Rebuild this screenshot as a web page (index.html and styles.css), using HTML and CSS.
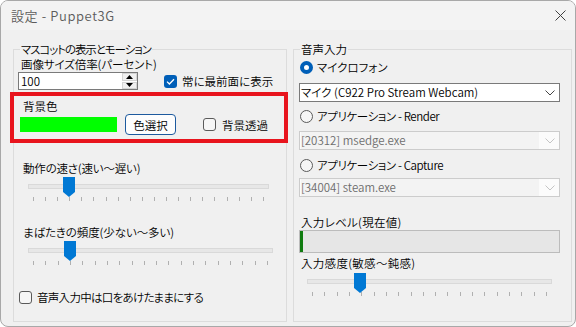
FILE: index.html
```html
<!DOCTYPE html>
<html lang="ja">
<head>
<meta charset="utf-8">
<title>設定 - Puppet3G</title>
<link rel="stylesheet" href="styles.css">
</head>
<body>
<div class="window">
  <div class="titlebar">
    <span class="title">設定 - Puppet3G</span>
    <svg class="close" width="11" height="11" viewBox="0 0 11 11"><path d="M0.5 0.5 L10.5 10.5 M10.5 0.5 L0.5 10.5" stroke="#404040" stroke-width="1" fill="none"/></svg>
  </div>
  <div class="client">
    <fieldset class="group group-left">
      <legend>マスコットの表示とモーション</legend>
      <div class="lbl lbl-size">画像サイズ倍率(パーセント)</div>
      <div class="size-row">
        <div class="numeric">
          <span class="num-val">100</span>
          <span class="spin">
            <span class="spin-btn"><svg width="7" height="4" viewBox="0 0 7 4"><path d="M3.5 0 L7 4 L0 4 Z" fill="#000"/></svg></span>
            <span class="spin-btn"><svg width="7" height="4" viewBox="0 0 7 4"><path d="M0 0 L7 0 L3.5 4 Z" fill="#000"/></svg></span>
          </span>
        </div>
        <span class="chk chk-on"><svg width="9" height="7" viewBox="0 0 9 7"><path d="M1 3.6 L3.4 6 L8 1.2" stroke="#fff" stroke-width="1.3" fill="none"/></svg></span>
        <span class="chk-label">常に最前面に表示</span>
      </div>
      <div class="highlight">
        <div class="lbl lbl-bg">背景色</div>
        <div class="bg-row">
          <span class="swatch"></span>
          <span class="btn">色選択</span>
          <span class="chk chk-off chk-bgt"></span>
          <span class="chk-label chk-label-bgt">背景透過</span>
        </div>
      </div>
      <div class="lbl lbl-speed">動作の速さ(速い～遅い)</div>
      <div class="slider slider-speed">
        <div class="track"></div>
        <div class="ticks"><i></i><i></i><i></i><i></i><i></i><i></i><i></i><i></i><i></i><i></i><i></i><i></i><i></i><i></i><i></i><i></i><i></i><i></i><i></i><i></i></div>
        <svg class="thumb" width="12" height="20" viewBox="0 0 12 20"><path d="M0 0 H12 V15 L6 20 L0 15 Z" fill="#0078d4"/></svg>
      </div>
      <div class="lbl lbl-blink">まばたきの頻度(少ない～多い)</div>
      <div class="slider slider-blink">
        <div class="track"></div>
        <div class="ticks"><i></i><i></i><i></i><i></i><i></i><i></i><i></i><i></i><i></i><i></i><i></i><i></i><i></i><i></i><i></i><i></i><i></i><i></i><i></i><i></i></div>
        <svg class="thumb" width="12" height="20" viewBox="0 0 12 20"><path d="M0 0 H12 V15 L6 20 L0 15 Z" fill="#0078d4"/></svg>
      </div>
      <div class="mouth-row">
        <span class="chk chk-off"></span>
        <span class="chk-label chk-label-mouth">音声入力中は口をあけたままにする</span>
      </div>
    </fieldset>

    <fieldset class="group group-right">
      <legend>音声入力</legend>
      <div class="radio-row rr-mic">
        <span class="radio radio-on"></span>
        <span class="radio-label">マイクロフォン</span>
      </div>
      <div class="combo combo-mic">
        <span class="combo-text">マイク (C922 Pro Stream Webcam)</span>
        <svg class="chev" width="10" height="6" viewBox="0 0 10 6"><path d="M0.5 0.5 L5 5 L9.5 0.5" stroke="#444" stroke-width="1" fill="none"/></svg>
      </div>
      <div class="radio-row rr-render">
        <span class="radio"></span>
        <span class="radio-label radio-label-app">アプリケーション - Render</span>
      </div>
      <div class="combo combo-dis combo-render">
        <span class="combo-text">[20312] msedge.exe</span>
        <svg class="chev" width="10" height="6" viewBox="0 0 10 6"><path d="M0.5 0.5 L5 5 L9.5 0.5" stroke="#c4c4c4" stroke-width="1" fill="none"/></svg>
      </div>
      <div class="radio-row rr-capture">
        <span class="radio"></span>
        <span class="radio-label radio-label-app">アプリケーション - Capture</span>
      </div>
      <div class="combo combo-dis combo-capture">
        <span class="combo-text">[34004] steam.exe</span>
        <svg class="chev" width="10" height="6" viewBox="0 0 10 6"><path d="M0.5 0.5 L5 5 L9.5 0.5" stroke="#c4c4c4" stroke-width="1" fill="none"/></svg>
      </div>
      <div class="lbl lbl-level">入力レベル(現在値)</div>
      <div class="level"><span class="level-fill" style="width:3px"></span></div>
      <div class="lbl lbl-sens">入力感度(敏感～鈍感)</div>
      <div class="slider slider-sens">
        <div class="track"></div>
        <div class="ticks"><i></i><i></i><i></i><i></i><i></i><i></i><i></i><i></i><i></i><i></i><i></i><i></i><i></i><i></i><i></i><i></i><i></i><i></i><i></i><i></i></div>
        <svg class="thumb" width="12" height="20" viewBox="0 0 12 20"><path d="M0 0 H12 V15 L6 20 L0 15 Z" fill="#0078d4"/></svg>
      </div>
    </fieldset>
  </div>
</div>
</body>
</html>
```
FILE: styles.css
```css
* { box-sizing: border-box; }
html, body { margin: 0; padding: 0; background: #ffffff; }
body {
  font-family: "Noto Sans CJK JP", "Noto Sans", sans-serif;
  font-size: 11.5px;
  font-weight: 350;
  line-height: 14px;
  color: #000;
  font-feature-settings: "palt";
}
.window {
  width: 576px;
  height: 327px;
  border: 1px solid #a8a8a8;
  border-radius: 8px;
  overflow: hidden;
  background: #f0f0f0;
  display: flex;
  flex-direction: column;
}
.titlebar {
  height: 29px;
  flex: none;
  background: #f3f3f3;
  display: flex;
  align-items: center;
  justify-content: space-between;
  padding: 0 9px 0 10px;
}
.title { color: #5c5c5c; font-size: 13px; letter-spacing: 0.6px; }
.close { display: block; }

.client {
  flex: 1;
  display: flex;
  gap: 6px;
  padding: 12px 3px 0 12px;
}
.group {
  margin: 0;
  padding: 0;
  border: 1px solid #dcdcdc;
  min-width: 0;
  height: 280px;
}
.group-left { width: 274px; }
.group-right { width: 279px; }
legend {
  padding: 0 1px;
  margin-left: 6px;
  line-height: 14px;
}
.group-left legend { letter-spacing: -1.1px; }
.lbl { white-space: nowrap; }
.lbl-size { margin: 1px 0 0 7px; letter-spacing: -0.1px; }

.size-row {
  display: flex;
  align-items: center;
  height: 18px;
  margin-top: 1px;
}
.numeric {
  width: 120px;
  height: 18px;
  margin-left: 4px;
  border: 1px solid #7a7a7a;
  background: #fff;
  display: flex;
}
.num-val { flex: 1; padding-left: 2px; line-height: 16px; }
.spin {
  width: 15px;
  display: flex;
  flex-direction: column;
  gap: 1px;
}
.spin-btn {
  flex: 1;
  display: flex;
  align-items: center;
  justify-content: center;
  background: #f0f0f0;
  border: 1px solid #d4d4d4;
}
.spin-btn svg { display: block; }

.chk {
  width: 13px;
  height: 13px;
  border-radius: 3px;
  flex: none;
  display: flex;
  align-items: center;
  justify-content: center;
}
.chk-on { background: #005fb8; margin-left: 26px; }
.chk-off { border: 1px solid #5a5a5a; background: #f6f6f6; }
.chk-label { margin-left: 5px; white-space: nowrap; }
.chk-label-mouth { letter-spacing: -0.7px; }

.highlight {
  width: 278px;
  height: 51px;
  margin: 2px 0 0 -4px;
  border: 4px solid #e8141d;
  padding: 3px 0 0 6px;
  position: relative;
}
.lbl-bg { margin-left: 3px; }
.bg-row {
  display: flex;
  align-items: center;
  height: 21px;
  margin-top: 1px;
}
.swatch { width: 97px; height: 15px; background: #00ff00; flex: none; }
.btn {
  width: 51px;
  height: 21px;
  margin-left: 8px;
  border: 1px solid #1d5a9e;
  border-radius: 4px;
  background: #fdfdfd;
  display: flex;
  align-items: center;
  justify-content: center;
  flex: none;
}
.chk-bgt { margin-left: 27px; }
.chk-label-bgt { margin-left: 6px; }

.lbl-speed { margin: 18px 0 0 9px; letter-spacing: -0.2px; }
.lbl-blink { margin: 24px 0 0 9px; letter-spacing: -0.1px; }

.slider { position: relative; margin-top: 2px; padding-top: 7px; }
.track {
  height: 5px;
  border: 1px solid #d9d9d9;
  background: #e7e7e7;
}
.ticks {
  display: flex;
  justify-content: space-between;
  height: 4px;
  margin-top: 8px;
}
.ticks i { display: block; width: 1px; height: 4px; background: #b0b0b0; }
.thumb { position: absolute; top: 0; display: block; }

.slider-speed .track { margin-left: 14px; width: 241px; }
.slider-speed .ticks { margin-left: 19px; width: 231px; }
.slider-speed .thumb { left: 49px; }
.slider-blink .track { margin-left: 14px; width: 245px; }
.slider-blink .ticks { margin-left: 19px; width: 235px; }
.slider-blink .thumb { left: 50px; }

.mouth-row {
  display: flex;
  align-items: center;
  height: 14px;
  margin: 25px 0 0 5px;
}

.radio-row { display: flex; align-items: center; height: 14px; margin-left: 6px; }
.rr-mic { margin-top: 4px; }
.rr-render { margin-top: 7px; }
.rr-capture { margin-top: 8px; }
.radio {
  width: 13px;
  height: 13px;
  border-radius: 50%;
  border: 1px solid #5a5a5a;
  background: #f6f6f6;
  flex: none;
}
.radio-on {
  border: 4px solid #005fb8;
  background: #fff;
}
.radio-label { margin-left: 4px; white-space: nowrap; }
.radio-label-app { letter-spacing: -0.4px; }

.combo {
  width: 261px;
  height: 19px;
  margin-left: 5px;
  border: 1px solid #7a7a7a;
  background: #fff;
  display: flex;
  align-items: center;
  justify-content: space-between;
  padding: 0 4px 0 1px;
}
.combo-text { white-space: nowrap; line-height: 17px; }
.chev { display: block; flex: none; }
.combo-mic { margin-top: 9px; }
.combo-render { margin-top: 8px; }
.combo-capture { margin-top: 6px; }
.combo-dis { border-color: #cccccc; background: #fbfbfb; color: #6d6d6d; }
.combo-dis .combo-text { background: #f3f3f3; width: 238px; }

.lbl-level { margin: 18px 0 0 7px; letter-spacing: 0.3px; }
.level {
  width: 261px;
  height: 23px;
  margin: 1px 0 0 5px;
  border: 1px solid #bcbcbc;
  background: #e6e6e6;
  display: flex;
}
.level-fill { display: block; height: 100%; background: #107c10; }
.lbl-sens { margin: 3px 0 0 7px; letter-spacing: 0.3px; }

.slider-sens { margin-top: 3px; padding-top: 6px; }
.slider-sens .track { margin-left: 13px; width: 245px; }
.slider-sens .ticks { margin-left: 18px; width: 235px; }
.slider-sens .thumb { left: 60px; }
```
